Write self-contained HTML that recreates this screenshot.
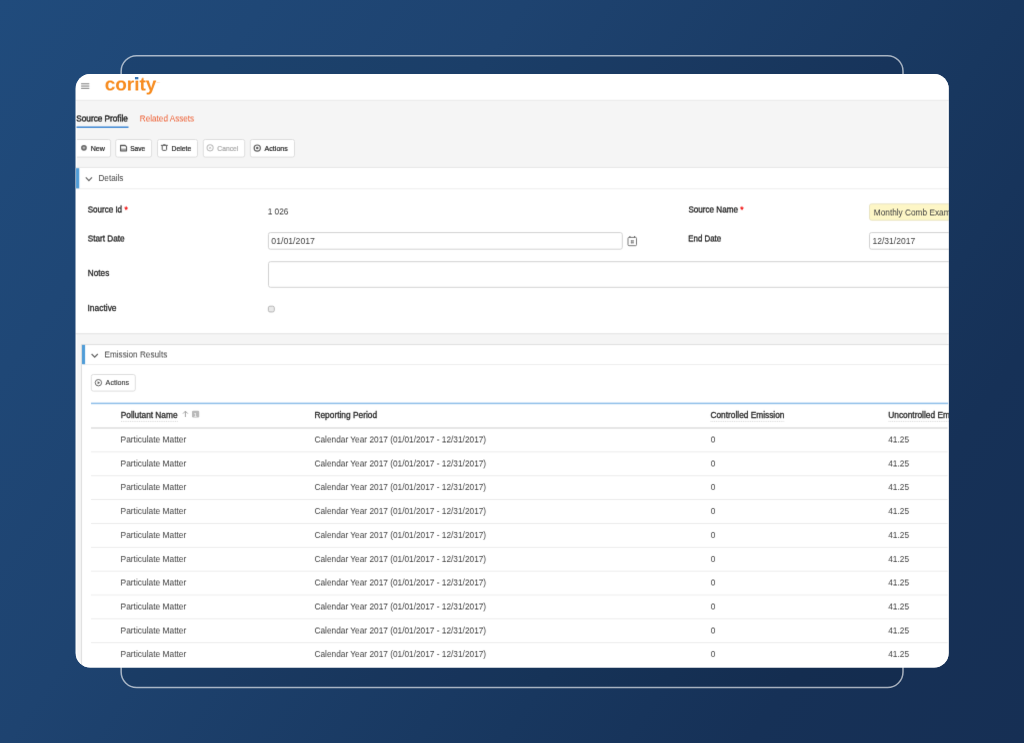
<!DOCTYPE html>
<html lang="en">
<head>
<meta charset="utf-8">
<title>Cority - Source Profile</title>
<style>
*{box-sizing:border-box;margin:0;padding:0}
html,body{width:1024px;height:743px;overflow:hidden}
body{position:relative;font-family:"Liberation Sans",sans-serif;font-size:8.6px;color:#404040;
  background:linear-gradient(125deg,rgb(32,75,124) 0%,rgb(30,67,112) 34%,rgb(24,55,95) 66%,rgb(22,49,87) 82%,rgb(22,47,84) 100%);}
svg.g{position:absolute;left:0;top:0}
.card{position:absolute;left:76px;top:74px;width:873px;height:594px;border-radius:14px;overflow:hidden}
.in{position:absolute;left:-76px;top:-74px;width:1024px;height:743px}
.A{filter:url(#soft)}
.B{filter:url(#half)}
.t{position:absolute;white-space:nowrap;line-height:10px;height:10px;transform-origin:0 50%}
.b{color:#262626;-webkit-text-stroke:.3px #262626}
.s{-webkit-text-stroke-width:.22px}
.red{color:#f21c1c;-webkit-text-stroke:.35px #f21c1c}
#logo{height:24px;line-height:24px;font-weight:bold;color:#f68b1f}
</style>
</head>
<body>
<svg class="g" width="1024" height="743" viewBox="0 0 1024 743">
<defs>
<clipPath id="cc"><rect x="75.7" y="73.9" width="872.95" height="593.50" rx="14.5"/></clipPath>
<filter id="soft" filterUnits="userSpaceOnUse" x="0" y="0" width="1024" height="743" color-interpolation-filters="sRGB"><feConvolveMatrix order="3 3" kernelMatrix="0.0064 0.0672 0.0064 0.0672 0.7056 0.0672 0.0064 0.0672 0.0064" divisor="1" edgeMode="duplicate" preserveAlpha="false"/></filter>
<filter id="half" filterUnits="userSpaceOnUse" x="0" y="0" width="1024" height="743" color-interpolation-filters="sRGB"><feConvolveMatrix order="3 4" kernelMatrix="-0.00500 -0.05250 -0.00500 0.04500 0.47250 0.04500 0.04500 0.47250 0.04500 -0.00500 -0.05250 -0.00500" targetX="1" targetY="2" divisor="1" edgeMode="duplicate" preserveAlpha="false"/></filter>
</defs>
<rect x="121.15" y="55.8" width="781.85" height="631.7" rx="15.5" fill="rgba(0,0,0,.07)" stroke="rgba(255,255,255,.62)" stroke-width="1.5"/>
<rect x="75.7" y="73.9" width="872.95" height="593.50" rx="14.5" fill="#f5f5f5"/>
<g clip-path="url(#cc)"><g filter="url(#soft)">
<rect x="60" y="60" width="920" height="640" fill="#f5f5f5"/>
<rect x="76.3" y="74.5" width="871.75" height="592.3" rx="14" fill="none" stroke="#fdfdfd" stroke-width="1.2"/>
<rect x="70.00" y="70.00" width="890.00" height="29.90" fill="#fff" />
<rect x="70.00" y="99.85" width="890.00" height="0.90" fill="#e9e9e9"/>
<rect x="81.10" y="83.30" width="8.20" height="1.00" fill="#7c7c7c"/>
<rect x="81.10" y="85.55" width="8.20" height="1.00" fill="#7c7c7c"/>
<rect x="81.10" y="87.80" width="8.20" height="1.00" fill="#7c7c7c"/>
<rect x="76.50" y="126.45" width="52.00" height="1.50" fill="#3f88d3"/>
<rect x="70.50" y="139.50" width="40.10" height="17.60" rx="2" fill="#fff" stroke="#dedede" stroke-width="1"/>
<rect x="115.70" y="139.50" width="35.90" height="17.60" rx="2" fill="#fff" stroke="#dedede" stroke-width="1"/>
<rect x="157.50" y="139.50" width="40.00" height="17.60" rx="2" fill="#fff" stroke="#dedede" stroke-width="1"/>
<rect x="203.30" y="139.50" width="41.40" height="17.60" rx="2" fill="#fff" stroke="#dedede" stroke-width="1"/>
<rect x="250.30" y="139.50" width="44.20" height="17.60" rx="2" fill="#fff" stroke="#dedede" stroke-width="1"/>
<rect x="75.50" y="138.60" width="1.50" height="19.40" fill="#fcfcfc" />
<circle cx="83.95" cy="147.8" r="2.85" fill="#686868"/><path d="M83.95 146.4v2.8M82.55 147.8h2.8" stroke="#d4d4d4" stroke-width=".8"/>
<g fill="none" stroke="#585858"><path d="M120.55 145.4h4.6l1.4 1.4v4.05h-6z" stroke-width="1.1" stroke-linejoin="round"/><path d="M120.6 149.2h5.9" stroke-width=".8"/><path d="M121 145.7h4" stroke-width=".9"/></g>
<g fill="none" stroke="#555" stroke-width="1"><path d="M160.9 145.35H167.8"/><path d="M163.2 144.6H165.5" stroke-width=".8"/><path d="M162.2 145.8V149.5Q162.2 150.35 163.05 150.35H165.75Q166.6 150.35 166.6 149.5V145.8"/></g>
<g fill="none" stroke="#b9b9b9"><circle cx="210.1" cy="147.85" r="3.05" stroke-width="1.05"/><path d="M209.1 146.85l2 2M211.1 146.85l-2 2" stroke-width=".8"/></g>
<circle cx="257.25" cy="148.1" r="3.1" fill="none" stroke="#5e5e5e" stroke-width="1.2"/><circle cx="257.25" cy="148.1" r="1.25" fill="#5e5e5e"/>
<rect x="70.00" y="167.70" width="890.00" height="165.60" fill="#fff" />
<rect x="70.00" y="166.95" width="890.00" height="0.90" fill="#e6e6e6"/>
<rect x="70.00" y="188.35" width="890.00" height="0.90" fill="#ececec"/>
<rect x="70.00" y="333.30" width="890.00" height="1.00" fill="#e3e3e3"/>
<rect x="76.00" y="168.20" width="3.25" height="20.20" fill="#4f9cd7" />
<path d="M85.8 177.4l3.1 3.2 3.1-3.2" fill="none" stroke="#626262" stroke-width="1.15"/>
<rect x="869.50" y="203.90" width="100.00" height="16.30" rx="2" fill="#fdf6c6" stroke="#e9e4c4" stroke-width="1"/>
<rect x="268.40" y="232.60" width="353.90" height="16.60" rx="2" fill="#fff" stroke="#d2d2d2" stroke-width="1"/>
<g transform="translate(627.4 235.9)" fill="none" stroke="#6a6a6a"><rect x=".6" y="1.5" width="8.5" height="8.3" rx="1" stroke-width=".9"/><path d="M2.5.2v1.7M7.2.2v1.7" stroke-width="1.1"/><path d="M3.3 5h3.2M3.3 6.8h3.2M4.2 4.1v3.6M5.6 4.1v3.6" stroke-width=".65"/></g>
<rect x="869.50" y="232.60" width="100.00" height="16.60" rx="2" fill="#fff" stroke="#d2d2d2" stroke-width="1"/>
<rect x="268.50" y="261.70" width="701.00" height="25.60" rx="2" fill="#fff" stroke="#d2d2d2" stroke-width="1"/>
<rect x="268.35" y="306.20" width="5.95" height="5.75" rx="1.6" fill="#e9e9e9" stroke="#b0b0b0" stroke-width="0.9"/>
<rect x="81.50" y="344.60" width="888.00" height="354.90" rx="0" fill="#fff" stroke="#dedede" stroke-width="1"/>
<rect x="83.00" y="364.15" width="877.00" height="0.90" fill="#ececec"/>
<rect x="82.00" y="344.90" width="3.10" height="19.30" fill="#4f9cd7" />
<path d="M91.6 354l3.1 3.2 3.1-3.2" fill="none" stroke="#626262" stroke-width="1.15"/>
<rect x="91.30" y="374.50" width="44.00" height="16.60" rx="2" fill="#fff" stroke="#dedede" stroke-width="1"/>
<g transform="translate(94.4 378.7)"><circle cx="4" cy="4" r="3.2" fill="none" stroke="#5a5a5a" stroke-width=".9"/><path d="M3.2 2.5 5.7 4 3.2 5.5z" fill="#5a5a5a"/></g>
<rect x="91.00" y="402.60" width="857.20" height="1.60" fill="#93c1ea"/>
<path d="M121 421.4H178" stroke="#cfcfcf" stroke-width=".8" stroke-dasharray="1 .8" fill="none"/>
<path d="M710.5 421.4H784.5" stroke="#cfcfcf" stroke-width=".8" stroke-dasharray="1 .8" fill="none"/>
<path d="M888.5 421.4H960" stroke="#cfcfcf" stroke-width=".8" stroke-dasharray="1 .8" fill="none"/>
<path d="M185.4 417V411.2M183 413.6l2.4-2.4 2.4 2.4" stroke="#a2a2a2" stroke-width="1" fill="none"/>
<rect x="192" y="410.8" width="7.2" height="6.7" rx="1.2" fill="#b9b9b9"/>
<rect x="91.00" y="427.25" width="856.60" height="1.50" fill="#dedede"/>
<rect x="91.00" y="451.47" width="856.60" height="0.85" fill="#e9e9e9"/>
<rect x="91.00" y="475.32" width="856.60" height="0.85" fill="#e9e9e9"/>
<rect x="91.00" y="499.17" width="856.60" height="0.85" fill="#e9e9e9"/>
<rect x="91.00" y="523.03" width="856.60" height="0.85" fill="#e9e9e9"/>
<rect x="91.00" y="546.88" width="856.60" height="0.85" fill="#e9e9e9"/>
<rect x="91.00" y="570.73" width="856.60" height="0.85" fill="#e9e9e9"/>
<rect x="91.00" y="594.58" width="856.60" height="0.85" fill="#e9e9e9"/>
<rect x="91.00" y="618.43" width="856.60" height="0.85" fill="#e9e9e9"/>
<rect x="91.00" y="642.28" width="856.60" height="0.85" fill="#e9e9e9"/>
</g>
</g>
</svg>
<div class="card"><div class="in A">
<div class="t" style="left:156.4px;top:79.6px;font-size:2.2px;line-height:4px;height:4px;color:#f9b877">TM</div>
<div class="t b s" style="left:90px;top:144px;font-size:7.4px;transform:translateX(0.71px) scaleX(0.9621);">New</div>
<div class="t b s" style="left:130px;top:144px;font-size:7.4px;transform:translateX(0.18px) scaleX(0.8951);">Save</div>
<div class="t b s" style="left:171px;top:144px;font-size:7.4px;transform:translateX(0.51px) scaleX(0.9244);">Delete</div>
<div class="t b s" style="left:217px;top:144px;font-size:7.4px;transform:translateX(0.36px) scaleX(0.9090);color:#a9a9a9;-webkit-text-stroke-color:#a9a9a9">Cancel</div>
<div class="t b s" style="left:264px;top:144px;font-size:7.4px;transform:translateX(0.59px) scaleX(0.9606);">Actions</div>
<div class="t" style="left:98px;top:173px;font-size:9.2px;transform:translateX(0.40px) scaleX(0.8923);color:#444">Details</div>
<div class="t" style="left:271px;top:236px;font-size:8.6px;transform:translateX(0.28px) scaleX(1.0152);">01/01/2017</div>
<div class="t" style="left:872px;top:236px;font-size:8.6px;transform:translateX(0.43px) scaleX(0.9948);">12/31/2017</div>
<div class="t b" style="left:87px;top:268px;font-size:8.6px;transform:translateX(0.86px) scaleX(0.9518);">Notes</div>
<div class="t b" style="left:87px;top:303px;font-size:8.6px;transform:translateX(0.53px) scaleX(0.9789);">Inactive</div>
<div class="t s" style="left:105px;top:378px;font-size:7.4px;transform:translateX(0.61px) scaleX(0.9708);color:#333;-webkit-text-stroke:.12px #333">Actions</div>
<div class="t b" style="left:120px;top:410px;font-size:8.6px;transform:translateX(0.71px) scaleX(0.9673);">Pollutant Name</div>
<div class="t b" style="left:314px;top:410px;font-size:8.6px;transform:translateX(0.43px) scaleX(0.9711);">Reporting Period</div>
<div class="t b" style="left:710px;top:410px;font-size:8.6px;transform:translateX(0.48px) scaleX(0.9679);">Controlled Emission</div>
<div class="t b" style="left:888px;top:410px;font-size:8.6px;transform:translateX(0.20px) scaleX(0.9720);">Uncontrolled Emission</div>
<div class="t" style="left:193px;top:410px;font-size:5.5px;transform:translateX(0.86px) scaleX(1.0000);color:#f4f4f4;font-weight:bold">1</div>
<div class="t" style="left:120px;top:482px;font-size:8.6px;transform:translateX(0.54px) scaleX(0.9770);">Particulate Matter</div>
<div class="t" style="left:314px;top:482px;font-size:8.6px;transform:translateX(0.51px) scaleX(0.9655);">Calendar Year 2017 (01/01/2017 - 12/31/2017)</div>
<div class="t" style="left:710px;top:482px;font-size:8.6px;transform:translateX(0.81px) scaleX(0.9655);">0</div>
<div class="t" style="left:888px;top:482px;font-size:8.6px;transform:translateX(0.25px) scaleX(0.9655);">41.25</div>
<div class="t" style="left:120px;top:506px;font-size:8.6px;transform:translateX(0.54px) scaleX(0.9770);">Particulate Matter</div>
<div class="t" style="left:314px;top:506px;font-size:8.6px;transform:translateX(0.51px) scaleX(0.9655);">Calendar Year 2017 (01/01/2017 - 12/31/2017)</div>
<div class="t" style="left:710px;top:506px;font-size:8.6px;transform:translateX(0.81px) scaleX(0.9655);">0</div>
<div class="t" style="left:888px;top:506px;font-size:8.6px;transform:translateX(0.25px) scaleX(0.9655);">41.25</div>
<div class="t" style="left:120px;top:530px;font-size:8.6px;transform:translateX(0.54px) scaleX(0.9770);">Particulate Matter</div>
<div class="t" style="left:314px;top:530px;font-size:8.6px;transform:translateX(0.51px) scaleX(0.9655);">Calendar Year 2017 (01/01/2017 - 12/31/2017)</div>
<div class="t" style="left:710px;top:530px;font-size:8.6px;transform:translateX(0.81px) scaleX(0.9655);">0</div>
<div class="t" style="left:888px;top:530px;font-size:8.6px;transform:translateX(0.25px) scaleX(0.9655);">41.25</div>
<div class="t" style="left:120px;top:554px;font-size:8.6px;transform:translateX(0.54px) scaleX(0.9770);">Particulate Matter</div>
<div class="t" style="left:314px;top:554px;font-size:8.6px;transform:translateX(0.51px) scaleX(0.9655);">Calendar Year 2017 (01/01/2017 - 12/31/2017)</div>
<div class="t" style="left:710px;top:554px;font-size:8.6px;transform:translateX(0.81px) scaleX(0.9655);">0</div>
<div class="t" style="left:888px;top:554px;font-size:8.6px;transform:translateX(0.25px) scaleX(0.9655);">41.25</div>
<div class="t" style="left:120px;top:649px;font-size:8.6px;transform:translateX(0.54px) scaleX(0.9770);">Particulate Matter</div>
<div class="t" style="left:314px;top:649px;font-size:8.6px;transform:translateX(0.51px) scaleX(0.9655);">Calendar Year 2017 (01/01/2017 - 12/31/2017)</div>
<div class="t" style="left:710px;top:649px;font-size:8.6px;transform:translateX(0.81px) scaleX(0.9655);">0</div>
<div class="t" style="left:888px;top:649px;font-size:8.6px;transform:translateX(0.25px) scaleX(0.9655);">41.25</div>
</div><div class="in B">
<div class="t" id="logo" style="left:104.7px;top:72px;font-size:19px">cority</div>
<div class="t b" style="left:76px;top:113px;font-size:8.6px;transform:translateX(0.30px) scaleX(0.9554);-webkit-text-stroke-width:.4px">Source Profile</div>
<div class="t" style="left:139px;top:113px;font-size:8.6px;transform:translateX(0.86px) scaleX(0.9471);color:#ee5f33">Related Assets</div>
<div class="t b" style="left:87px;top:204px;font-size:8.6px;transform:translateX(0.66px) scaleX(0.9358);">Source Id</div>
<div class="t red" style="left:124px;top:204px;font-size:8.6px;transform:translateX(0.52px) scaleX(1.0000);">*</div>
<div class="t" style="left:267px;top:206px;font-size:8.6px;transform:translateX(0.67px) scaleX(0.9655);">1 026</div>
<div class="t b" style="left:688px;top:204px;font-size:8.6px;transform:translateX(0.47px) scaleX(0.9404);">Source Name</div>
<div class="t red" style="left:740px;top:204px;font-size:8.6px;transform:translateX(0.15px) scaleX(1.0000);">*</div>
<div class="t" style="left:873px;top:207px;font-size:8.6px;transform:translateX(0.80px) scaleX(0.9620);">Monthly Comb Example</div>
<div class="t b" style="left:87px;top:233px;font-size:8.6px;transform:translateX(0.77px) scaleX(0.9506);">Start Date</div>
<div class="t b" style="left:688px;top:233px;font-size:8.6px;transform:translateX(0.32px) scaleX(0.9157);">End Date</div>
<div class="t" style="left:104px;top:349px;font-size:9.2px;transform:translateX(0.43px) scaleX(0.8916);color:#444">Emission Results</div>
<div class="t" style="left:120px;top:434px;font-size:8.6px;transform:translateX(0.54px) scaleX(0.9770);">Particulate Matter</div>
<div class="t" style="left:314px;top:434px;font-size:8.6px;transform:translateX(0.51px) scaleX(0.9655);">Calendar Year 2017 (01/01/2017 - 12/31/2017)</div>
<div class="t" style="left:710px;top:434px;font-size:8.6px;transform:translateX(0.81px) scaleX(0.9655);">0</div>
<div class="t" style="left:888px;top:434px;font-size:8.6px;transform:translateX(0.25px) scaleX(0.9655);">41.25</div>
<div class="t" style="left:120px;top:458px;font-size:8.6px;transform:translateX(0.54px) scaleX(0.9770);">Particulate Matter</div>
<div class="t" style="left:314px;top:458px;font-size:8.6px;transform:translateX(0.51px) scaleX(0.9655);">Calendar Year 2017 (01/01/2017 - 12/31/2017)</div>
<div class="t" style="left:710px;top:458px;font-size:8.6px;transform:translateX(0.81px) scaleX(0.9655);">0</div>
<div class="t" style="left:888px;top:458px;font-size:8.6px;transform:translateX(0.25px) scaleX(0.9655);">41.25</div>
<div class="t" style="left:120px;top:577px;font-size:8.6px;transform:translateX(0.54px) scaleX(0.9770);">Particulate Matter</div>
<div class="t" style="left:314px;top:577px;font-size:8.6px;transform:translateX(0.51px) scaleX(0.9655);">Calendar Year 2017 (01/01/2017 - 12/31/2017)</div>
<div class="t" style="left:710px;top:577px;font-size:8.6px;transform:translateX(0.81px) scaleX(0.9655);">0</div>
<div class="t" style="left:888px;top:577px;font-size:8.6px;transform:translateX(0.25px) scaleX(0.9655);">41.25</div>
<div class="t" style="left:120px;top:601px;font-size:8.6px;transform:translateX(0.54px) scaleX(0.9770);">Particulate Matter</div>
<div class="t" style="left:314px;top:601px;font-size:8.6px;transform:translateX(0.51px) scaleX(0.9655);">Calendar Year 2017 (01/01/2017 - 12/31/2017)</div>
<div class="t" style="left:710px;top:601px;font-size:8.6px;transform:translateX(0.81px) scaleX(0.9655);">0</div>
<div class="t" style="left:888px;top:601px;font-size:8.6px;transform:translateX(0.25px) scaleX(0.9655);">41.25</div>
<div class="t" style="left:120px;top:625px;font-size:8.6px;transform:translateX(0.54px) scaleX(0.9770);">Particulate Matter</div>
<div class="t" style="left:314px;top:625px;font-size:8.6px;transform:translateX(0.51px) scaleX(0.9655);">Calendar Year 2017 (01/01/2017 - 12/31/2017)</div>
<div class="t" style="left:710px;top:625px;font-size:8.6px;transform:translateX(0.81px) scaleX(0.9655);">0</div>
<div class="t" style="left:888px;top:625px;font-size:8.6px;transform:translateX(0.25px) scaleX(0.9655);">41.25</div>
</div><div class="in">
<svg class="g" width="1024" height="743" viewBox="0 0 1024 743"><rect x="134.2" y="76" width="4.8" height="4.1" fill="#fff"/><rect x="134.95" y="77.05" width="3.4" height="2.3" fill="#3774b3"/></svg>
</div></div>
</body>
</html>
